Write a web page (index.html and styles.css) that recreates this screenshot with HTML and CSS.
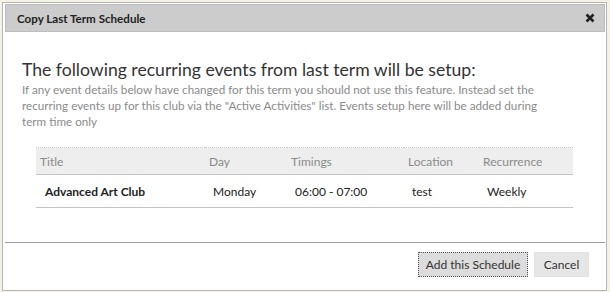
FILE: index.html
```html
<!DOCTYPE html>
<html>
<head>
<meta charset="utf-8">
<link rel="stylesheet" href="styles.css">
</head>
<body>
<div class="dialog">
  <div class="titlebar">
    <span class="title">Copy Last Term Schedule</span>
    <svg class="close" width="10" height="10" viewBox="0 0 10 10" aria-label="Close">
      <path d="M1.5 1.5 L8.5 8.5 M8.5 1.5 L1.5 8.5" stroke="#222" stroke-width="2.6" stroke-linecap="butt"/>
    </svg>
  </div>
  <div class="content">
    <h1 class="heading">The following recurring events from last term will be setup:</h1>
    <p class="note">If any event details below have changed for this term you should not use this feature. Instead set the recurring events up for this club via the "Active Activities" list. Events setup here will be added during term time only</p>
    <table class="events">
      <thead>
        <tr>
          <th class="c-title">Title</th>
          <th class="c-day">Day</th>
          <th class="c-time">Timings</th>
          <th class="c-loc">Location</th>
          <th class="c-rec">Recurrence</th>
        </tr>
      </thead>
      <tbody>
        <tr>
          <td class="c-title strong">Advanced Art Club</td>
          <td class="c-day">Monday</td>
          <td class="c-time">06:00 - 07:00</td>
          <td class="c-loc">test</td>
          <td class="c-rec">Weekly</td>
        </tr>
      </tbody>
    </table>
  </div>
  <div class="footer">
    <button class="btn btn-primary">Add this Schedule</button>
    <button class="btn">Cancel</button>
  </div>
</div>
</body>
</html>
```
FILE: styles.css
```css
html, body {
  margin: 0;
  padding: 0;
}
body {
  background: #f3f2e4;
  width: 610px;
  height: 292px;
  overflow: hidden;
  font-family: Lato, "Noto Sans", sans-serif;
}
.dialog {
  margin: 2px 3px 0 2px;
  height: 289px;
  background: #fff;
  border: 1px solid #b5b5b5;
  padding: 1px 1px 1px 2px;
  box-sizing: border-box;
  display: flex;
  flex-direction: column;
}
.titlebar {
  height: 28px;
  background: #cccccc;
  border: 1px solid #bdbdbd;
  box-sizing: border-box;
  display: flex;
  align-items: center;
  justify-content: space-between;
  padding: 0 9px 0 11px;
}
.title {
  font-size: 11.6px;
  font-weight: bold;
  color: #222;
}
.close {
  display: block;
}
.content {
  padding: 0 41px 0 17px;
  flex: 1;
}
.heading {
  margin: 26px 0 0 0;
  font-size: 17.6px;
  font-weight: normal;
  color: #333;
  line-height: 23px;
}
.note {
  margin: 0;
  font-size: 11.7px;
  line-height: 16px;
  color: #8a8a8a;
}
.events {
  margin: 18px 0 0 14px;
  width: 537px;
  border-collapse: collapse;
  table-layout: fixed;
  font-size: 12px;
}
.events th, .events td {
  box-sizing: border-box;
}
.events th {
  background: #eeeeee;
  border-top: 1px dotted #c8c8c8;
  border-bottom: 1px solid #c4c4c4;
  color: #8a8a8a;
  font-weight: normal;
  text-align: left;
  height: 27px;
  padding: 0 0 0 4px;
}
.events td {
  border-bottom: 1px solid #c4c4c4;
  color: #222;
  height: 33px;
  padding: 0 0 0 8px;
}
.events .strong { font-weight: bold; padding-left: 9px; }
.c-title { width: 169px; }
.c-day { width: 82px; }
.c-time { width: 117px; }
.c-loc { width: 75px; }
.footer {
  border-top: 1px solid #9e9e9e;
  height: 47px;
  display: flex;
  justify-content: flex-end;
  align-items: flex-start;
  gap: 6px;
  padding: 9px 16px 0 0;
  box-sizing: border-box;
}
.btn {
  font-family: inherit;
  font-size: 12px;
  color: #333;
  height: 25px;
  width: 55px;
  background: #e6e6e6;
  border: 1px solid #e2e2e2;
  padding: 0;
}
.btn-primary {
  width: 110px;
  background: #dcdcdc;
  border: 1px dotted #555;
}
```
